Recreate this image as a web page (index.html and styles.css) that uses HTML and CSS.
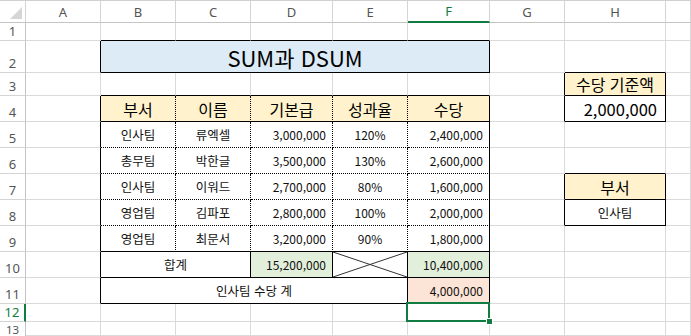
FILE: index.html
```html
<!DOCTYPE html>
<html lang="ko">
<head>
<meta charset="utf-8">
<title>SUM과 DSUM</title>
<link rel="stylesheet" href="styles.css">
</head>
<body>
<div class="sheet">
  <!-- column headers -->
  <div class="c ch corner"><span class="tri"></span></div>
  <div class="c ch">A</div><div class="c ch">B</div><div class="c ch">C</div><div class="c ch">D</div><div class="c ch">E</div><div class="c ch on">F</div><div class="c ch">G</div><div class="c ch">H</div><div class="c ch"></div>

  <!-- row 1 -->
  <div class="c rh">1</div><div class="c"></div>
  <div class="c bb"></div><div class="c bb"></div><div class="c bb"></div><div class="c bb"></div><div class="c bb"></div>
  <div class="c"></div><div class="c"></div><div class="c"></div>

  <!-- row 2 -->
  <div class="c rh">2</div><div class="c br"></div>
  <div class="c span5 br bb title">SUM과 DSUM</div>
  <div class="c"></div><div class="c bb"></div><div class="c"></div>

  <!-- row 3 -->
  <div class="c rh">3</div><div class="c"></div>
  <div class="c bb"></div><div class="c bb"></div><div class="c bb"></div><div class="c bb"></div><div class="c bb"></div>
  <div class="c br"></div><div class="c hd br bb">수당 기준액</div><div class="c"></div>

  <!-- row 4 -->
  <div class="c rh">4</div><div class="c br"></div>
  <div class="c hd dr bb">부서</div><div class="c hd dr bb">이름</div><div class="c hd dr bb">기본급</div><div class="c hd dr bb">성과율</div><div class="c hd br bb">수당</div>
  <div class="c br"></div><div class="c num big br bb">2,000,000</div><div class="c"></div>

  <!-- row 5 -->
  <div class="c rh">5</div><div class="c br"></div>
  <div class="c dr db">인사팀</div><div class="c dr db">류엑셀</div><div class="c num dr db">3,000,000</div><div class="c num2 dr db">120%</div><div class="c num br db">2,400,000</div>
  <div class="c"></div><div class="c"></div><div class="c"></div>

  <!-- row 6 -->
  <div class="c rh">6</div><div class="c br"></div>
  <div class="c dr db">총무팀</div><div class="c dr db">박한글</div><div class="c num dr db">3,500,000</div><div class="c num2 dr db">130%</div><div class="c num br db">2,600,000</div>
  <div class="c"></div><div class="c bb"></div><div class="c"></div>

  <!-- row 7 -->
  <div class="c rh">7</div><div class="c br"></div>
  <div class="c dr db">인사팀</div><div class="c dr db">이워드</div><div class="c num dr db">2,700,000</div><div class="c num2 dr db">80%</div><div class="c num br db">1,600,000</div>
  <div class="c br"></div><div class="c hd br bb">부서</div><div class="c"></div>

  <!-- row 8 -->
  <div class="c rh">8</div><div class="c br"></div>
  <div class="c dr db">영업팀</div><div class="c dr db">김파포</div><div class="c num dr db">2,800,000</div><div class="c num2 dr db">100%</div><div class="c num br db">2,000,000</div>
  <div class="c br"></div><div class="c br bb">인사팀</div><div class="c"></div>

  <!-- row 9 -->
  <div class="c rh">9</div><div class="c br"></div>
  <div class="c dr bb">영업팀</div><div class="c dr bb">최문서</div><div class="c num dr bb">3,200,000</div><div class="c num2 dr bb">90%</div><div class="c num br bb">1,800,000</div>
  <div class="c"></div><div class="c"></div><div class="c"></div>

  <!-- row 10 -->
  <div class="c rh">10</div><div class="c br"></div>
  <div class="c span2 br bb">합계</div>
  <div class="c num green br bb">15,200,000</div>
  <div class="c cross br bb"><svg class="x" viewBox="0 0 100 100" preserveAspectRatio="none"><line x1="0" y1="0" x2="100" y2="100"/><line x1="0" y1="100" x2="100" y2="0"/></svg></div>
  <div class="c num green br bb">10,400,000</div>
  <div class="c"></div><div class="c"></div><div class="c"></div>

  <!-- row 11 -->
  <div class="c rh">11</div><div class="c br"></div>
  <div class="c span4 br bb">인사팀 수당 계</div>
  <div class="c num peach br bb">4,000,000</div>
  <div class="c"></div><div class="c"></div><div class="c"></div>

  <!-- row 12 -->
  <div class="c rh on">12</div><div class="c"></div>
  <div class="c"></div><div class="c"></div><div class="c"></div><div class="c"></div><div class="c sel"></div>
  <div class="c"></div><div class="c"></div><div class="c"></div>

  <!-- row 13 -->
  <div class="c rh last">13</div><div class="c"></div>
  <div class="c"></div><div class="c"></div><div class="c"></div><div class="c"></div><div class="c"></div>
  <div class="c"></div><div class="c"></div><div class="c"></div>
</div>
</body>
</html>
```

FILE: styles.css
```css
html, body {
  margin: 0;
  padding: 0;
  background: #fff;
}

body {
  width: 691px;
  height: 336px;
  overflow: hidden;
  font-family: "Noto Sans CJK KR", "Noto Sans", sans-serif;
  color: #111;
}

.sheet {
  display: grid;
  width: 691px;
  grid-template-columns: 26px 75px 75px 75px 82px 75px 82px 75px 101px 1fr;
  grid-template-rows: 23px 18px 32px 23px repeat(8, 26px) 18px 14px;
}

.c {
  box-sizing: border-box;
  min-width: 0;
  display: flex;
  align-items: center;
  justify-content: center;
  border-right: 1px solid #dadada;
  border-bottom: 1px solid #dadada;
  font-size: 12.5px;
  white-space: nowrap;
  overflow: hidden;
}

/* headers */
.ch {
  border-top: 1px solid #d0d0d0;
  border-right-color: #d4d4d4;
  border-bottom-color: #c4c4c4;
  color: #555;
  font-size: 13px;
  font-family: "Noto Sans", "Noto Sans CJK KR", sans-serif;
}

.ch.on {
  color: #107c41;
  border-bottom: 2px solid #107c41;
}

.corner {
  align-items: flex-end;
  justify-content: flex-end;
  padding: 0 3px 3px 0;
}

.tri {
  width: 0;
  height: 0;
  border-left: 12px solid transparent;
  border-bottom: 12px solid #d6d6d6;
}

.rh {
  align-items: flex-end;
  line-height: 18px;
  border-right-color: #c4c4c4;
  border-bottom-color: #d4d4d4;
  color: #555;
  font-size: 13px;
  font-family: "Noto Sans", "Noto Sans CJK KR", sans-serif;
}

.rh.last {
  align-items: flex-start;
  line-height: 11px;
  font-size: 11.5px;
  padding-top: 2px;
  border-bottom: 0;
}

.rh.on {
  color: #107c41;
  border-right: 2px solid #107c41;
}

/* borders */
.br { border-right: 1px solid #000; }
.bb { border-bottom: 1px solid #000; }
.dr { border-right: 1px dotted #000; }
.db { border-bottom: 1px dotted #000; }

/* spans */
.span2 { grid-column: span 2; }
.span4 { grid-column: span 4; }
.span5 { grid-column: span 5; }

/* content styles */
.title {
  background: #ddebf7;
  font-size: 22px;
  color: #000;
}

.hd {
  background: #fff2cc;
  font-size: 16px;
  color: #000;
}

.num {
  justify-content: flex-end;
  padding-right: 6px;
  font-size: 12px;
}

.num2 {
  font-size: 12px;
}

.big {
  font-size: 16.5px;
  padding-right: 8px;
  color: #000;
}

.green { background: #e2efda; }
.peach { background: #fce4d6; }

.cross { padding: 0; }

.x {
  display: block;
  width: 100%;
  height: 100%;
}

.x line {
  stroke: #333;
  stroke-width: 1;
  vector-effect: non-scaling-stroke;
}

/* selected cell */
.sel {
  position: relative;
  overflow: visible;
}

.sel::before {
  content: "";
  position: absolute;
  top: -2px;
  left: -2px;
  right: -1px;
  bottom: -1px;
  border: 2px solid #107c41;
}

.sel::after {
  content: "";
  position: absolute;
  right: -4px;
  bottom: -4px;
  width: 5px;
  height: 5px;
  background: #107c41;
  border: 1px solid #fff;
}
```
